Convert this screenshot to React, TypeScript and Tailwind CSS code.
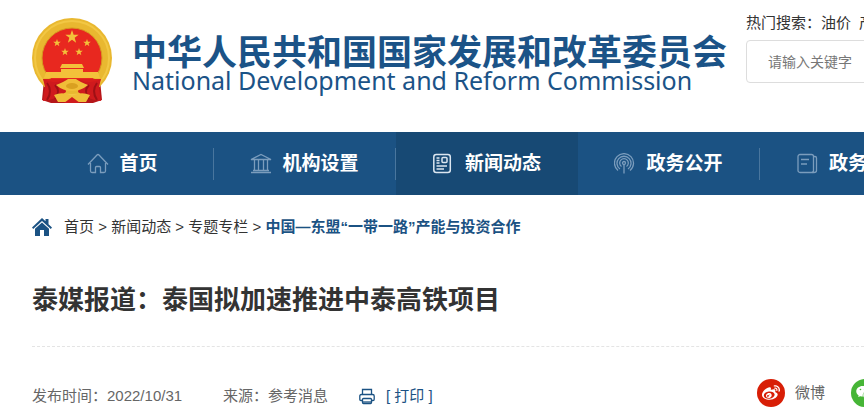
import type { ReactNode } from 'react';
import { FaWeibo } from 'react-icons/fa';
import { AiFillWechat } from 'react-icons/ai';

function Star({ x, y, r }: { x: number; y: number; r: number }) {
  const points = Array.from({ length: 10 }, (_, i) => {
    const angle = (Math.PI / 5) * i - Math.PI / 2;
    const radius = i % 2 === 0 ? r : r * 0.4;
    return `${x + radius * Math.cos(angle)},${y + radius * Math.sin(angle)}`;
  }).join(' ');
  return <polygon points={points} fill="#f3c13a" />;
}

function Emblem() {
  return (
    <svg width="82" height="88" viewBox="0 0 82 88" className="shrink-0" aria-hidden="true">
      <path d="M13 63 L11 83 L20 86 H62 L71 83 L69 63 Z" fill="#b5161a" />
      <circle cx="41" cy="41" r="40" fill="#e9b830" />
      <circle cx="41" cy="41" r="37" fill="none" stroke="#f2c744" strokeWidth="2" />
      <circle cx="41" cy="41" r="30" fill="#e8281f" stroke="#d69a20" />
      <Star x={41} y={20} r={7} />
      <Star x={26} y={26} r={4} />
      <Star x={56} y={26} r={4} />
      <Star x={34} y={35} r={4} />
      <Star x={48} y={35} r={4} />
      <path d="M31 47 H51 L53 51 H29 Z M30 52 H52 V55 H67 L69 61 H13 L15 55 H30 Z" fill="#f3c13a" />
      <path d="M12 62 H70 L67 67 H15 Z" fill="#d81e1c" />
      <path d="M12 62 Q22 68 33 63 L35 75 Q25 83 12 84 L14 70 Z" fill="#cf1a1d" />
      <path d="M70 62 Q60 68 49 63 L47 75 Q57 83 70 84 L68 70 Z" fill="#cf1a1d" />
      <path d="M16 66 Q22 74 16 83 M24 68 Q30 74 24 82 M66 66 Q60 74 66 83 M58 68 Q52 74 58 82" fill="none" stroke="#9f1015" strokeWidth="2" />
      <path d="M25 68 Q33 65 37 62 H45 Q49 65 57 68 Q50 74 41 74 Q32 74 25 68 Z" fill="#f0bd38" />
      <ellipse cx="41" cy="69" rx="6" ry="3" fill="#d9a021" />
      <path d="M23 78 Q32 74 41 79 Q50 74 59 78 L55 85 H27 Z" fill="#f0bd38" />
      <path d="M33 86 L41 80 L49 86 Z" fill="#cf1a1d" />
    </svg>
  );
}

const stroke = { fill: 'none', stroke: 'currentColor', strokeWidth: 1.3 };

const homeIcon = (
  <g {...stroke}>
    <path d="M1 11.5 L10 2 Q11 1 12 2 L21 11.5" />
    <path d="M3.500 10 V18 Q3.500 19.500 5 19.500 H8.500 V14.500 Q8.500 13.500 9.500 13.500 H12.500 Q13.500 13.500 13.500 14.500 V19.500 H17 Q18.500 19.500 18.500 18 V10" />
  </g>
);

const bankIcon = (
  <g {...stroke}>
    <path d="M1 6.500 L11 1.500 L21 6.500 Z M1 19.500 H21 M3 17.500 H19 M4.500 7 V17.500 M8.500 7 V17.500 M13.500 7 V17.500 M17.500 7 V17.500" />
  </g>
);

const newsIcon = (
  <g {...stroke} strokeWidth={1.5}>
    <rect x="0.800" y="1.500" width="16.500" height="18" rx="2.500" />
    <rect x="9" y="4.500" width="5" height="5" rx="1" />
    <path d="M3.500 5 H6.500 M3.500 7.500 H6.500 M3.500 10 H6.500 M3.500 13 H14 M3.500 16 H11" />
  </g>
);

const openIcon = (
  <g {...stroke}>
    <circle cx="10" cy="10" r="1.500" />
    <path d="M10 11.500 V20.500 M7.500 13.500 A4.300 4.300 0 1 1 12.500 13.500 M6 16 A7 7 0 1 1 14 16 M4 17.500 A9.500 9.500 0 1 1 16 17.500" />
  </g>
);

const serviceIcon = (
  <g {...stroke}>
    <rect x="1" y="1.500" width="15.500" height="18" rx="2" />
    <path d="M16.500 3.500 H18 Q19.500 3.500 19.500 5 V17.500 Q19.500 19.500 17 19.500 H15 M4 6.500 H12 M4 11 H10" />
  </g>
);

interface NavEntry {
  label: string;
  icon: ReactNode;
  active?: boolean;
  divider?: boolean;
}

const navEntries: NavEntry[] = [
  { label: '首页', icon: homeIcon, divider: true },
  { label: '机构设置', icon: bankIcon, divider: true },
  { label: '新闻动态', icon: newsIcon, active: true },
  { label: '政务公开', icon: openIcon, divider: true },
  { label: '政务服务', icon: serviceIcon },
];

function NavItem({ label, icon, active, divider }: NavEntry) {
  return (
    <li className={active ? 'flex w-[182px] shrink-0 items-center bg-[#174974]' : 'flex w-[182px] shrink-0 items-center'}>
      <a href="#" className="flex flex-1 items-center justify-center gap-[10px] text-[19px] leading-[63px] font-bold text-white">
        <svg
          width="22"
          height="22"
          viewBox="0 0 22 22"
          className={active ? 'text-[#dbe6f0]' : 'text-[#7b9dbd]'}
          aria-hidden="true"
        >
          {icon}
        </svg>
        {label}
      </a>
      {divider && <span className="h-8 w-px bg-[#49769e]" />}
    </li>
  );
}

export default function App() {
  return (
    <div className="min-h-screen overflow-hidden bg-white font-['Liberation_Sans','Noto_Sans_CJK_SC',sans-serif] text-[15px] leading-5 whitespace-nowrap text-[#333]">
      <header className="flex h-[132px] items-start pl-[31px]">
        <div className="flex shrink-0 items-start gap-[19px] pt-[17px]">
          <Emblem />
          <div className="w-[614px] pt-[13px] text-[#1b5387]">
            <h1 className="font-['Noto_Sans_CJK_SC',sans-serif] text-[35px] leading-10 font-bold">
              中华人民共和国国家发展和改革委员会
            </h1>
            <p className="font-['Noto_Sans',sans-serif] text-[25px] leading-5">
              National Development and Reform Commission
            </p>
          </div>
        </div>
        <div className="flex shrink-0 flex-col gap-[7px] pt-[13px]">
          <p className="flex gap-2">
            <span>
              热门搜索：<a href="#">油价</a>
            </span>
            <a href="#">产业</a>
          </p>
          <input
            type="text"
            aria-label="请输入关键字"
            placeholder="请输入关键字"
            className="h-[43px] w-[280px] rounded border border-[#ddd] px-[21px] text-sm placeholder:text-[#777]"
          />
        </div>
      </header>

      <nav className="bg-[#1b5283] pl-8">
        <ul className="flex">
          {navEntries.map((entry) => (
            <NavItem key={entry.label} {...entry} />
          ))}
        </ul>
      </nav>

      <main className="pl-8">
        <div className="flex items-center gap-3 pt-[22px]">
          <svg width="20" height="20" viewBox="0 0 20 20" fill="#1b5283" aria-hidden="true">
            <path d="M10 1 L13.500 4.300 V2 H16.500 V7.200 L20 10.500 L18.800 12 L10 4 L1.200 12 L0 10.500 Z" />
            <path d="M3 11.800 L10 5.500 L17 11.800 V19 H12 V13 H8 V19 H3 Z" />
          </svg>
          <p>
            <a href="#">首页</a> &gt; <a href="#">新闻动态</a> &gt; <a href="#">专题专栏</a> &gt;{' '}
            <a href="#" className="font-bold text-[#1b5283]">
              中国—东盟“一带一路”产能与投资合作
            </a>
          </p>
        </div>

        <h2 className="border-b border-dashed border-[#e4e4e4] pt-[45px] pb-[27px] text-[26px] leading-[37px] font-bold">
          泰媒报道：泰国拟加速推进中泰高铁项目
        </h2>

        <div className="flex items-start pt-8 text-[#666]">
          <div className="flex w-[725px] shrink-0 pt-[7px]">
            <p className="w-[191px]">发布时间：2022/10/31</p>
            <p className="w-[136px]">来源：参考消息</p>
            <button type="button" className="flex items-center gap-[11px] text-[#1b5283]">
              <svg width="16" height="18" viewBox="0 0 16 18" fill="none" stroke="currentColor" strokeWidth="1.300" aria-hidden="true">
                <path d="M3.500 7.500 V2.500 H12.500 V7.500 M3.500 13.500 H2 Q0.800 13.500 0.800 12.300 V9 Q0.800 7.500 2.300 7.500 H13.700 Q15.200 7.500 15.200 9 V12.300 Q15.200 13.500 14 13.500 H12.500" />
                <rect x="3.500" y="11.500" width="9" height="5" rx="1" />
                <path d="M4 15 H12" />
              </svg>
              [ 打印 ]
            </button>
          </div>
          <div className="flex shrink-0 items-center gap-[26px]">
            <a href="#" className="flex items-center gap-[10px]">
              <span className="flex size-7 items-center justify-center rounded-full bg-[#d81e06] text-white">
                <FaWeibo size={18} />
              </span>
              微博
            </a>
            <a href="#" className="flex items-center gap-[10px]">
              <span className="flex size-7 items-center justify-center rounded-full bg-[#46b536] text-white">
                <AiFillWechat size={20} />
              </span>
              微信
            </a>
          </div>
        </div>
      </main>
    </div>
  );
}
